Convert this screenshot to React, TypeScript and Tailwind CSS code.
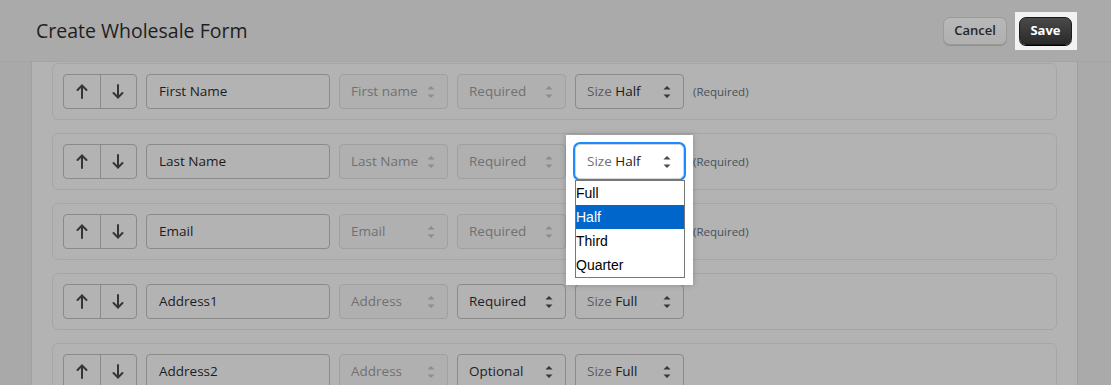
import React from 'react';

type Row = {
  label: string;
  field: string;
  req: string;
  reqEnabled: boolean;
  size: string;
  required: boolean;
  open?: boolean;
  covered?: boolean;
};

const rows: Row[] = [
  { label: 'First Name', field: 'First name', req: 'Required', reqEnabled: false, size: 'Half', required: true },
  { label: 'Last Name', field: 'Last Name', req: 'Required', reqEnabled: false, size: 'Half', required: true, open: true },
  { label: 'Email', field: 'Email', req: 'Required', reqEnabled: false, size: 'Half', required: true, covered: true },
  { label: 'Address1', field: 'Address', req: 'Required', reqEnabled: true, size: 'Full', required: false },
  { label: 'Address2', field: 'Address', req: 'Optional', reqEnabled: true, size: 'Full', required: false },
];

function SelectArrows({ className }: { className?: string }) {
  return (
    <svg viewBox="0 0 20 20" className={className} fill="currentColor">
      <path d="M13 8l-3-3-3 3h6zm-.1 4L10 14.9 7.1 12h5.8z" />
    </svg>
  );
}

function Arrow({ down }: { down?: boolean }) {
  return (
    <svg
      viewBox="0 0 12 15"
      className={down ? 'h-[15px] w-[12px] rotate-180' : 'h-[15px] w-[12px]'}
      fill="none"
      stroke="#353535"
      strokeWidth="2"
      strokeLinecap="round"
      strokeLinejoin="round"
    >
      <path d="M6 1.5V14" />
      <path d="M1.5 6 6 1.5 10.5 6" />
    </svg>
  );
}

function FieldSelect({ text, enabled }: { text: string; enabled: boolean }) {
  return (
    <div
      className={
        enabled
          ? 'flex h-[35px] w-[109px] shrink-0 items-center justify-between rounded-[4px] border border-[#8a8a8a] bg-[#b3b3b3] pl-[11px] pr-[4px] text-[13.5px] whitespace-nowrap text-[#1f1f1f]'
          : 'flex h-[35px] w-[109px] shrink-0 items-center justify-between rounded-[4px] border border-[#a0a0a0] bg-[#b0b0b0] pl-[11px] pr-[4px] text-[13.5px] whitespace-nowrap text-[#707070]'
      }
    >
      <span>{text}</span>
      <SelectArrows className={enabled ? 'h-6 w-6 shrink-0 text-[#363636]' : 'h-6 w-6 shrink-0 text-[#8c8c8c]'} />
    </div>
  );
}

function SizeSelect({ size, open, covered }: { size: string; open?: boolean; covered?: boolean }) {
  if (!open) {
    return (
      <div
        className={
          covered
            ? 'invisible flex h-[35px] w-[109px] shrink-0 items-center justify-between rounded-[4px] border border-[#8a8a8a] pl-[11px] pr-[4px] text-[13.5px]'
            : 'flex h-[35px] w-[109px] shrink-0 items-center justify-between rounded-[4px] border border-[#8a8a8a] bg-[#b3b3b3] pl-[11px] pr-[4px] text-[13.5px] whitespace-nowrap'
        }
      >
        <span>
          <span className="text-[#595c5f]">Size </span>
          <span className="text-[#1a1a1a]">{size}</span>
        </span>
        <SelectArrows className="h-6 w-6 shrink-0 text-[#363636]" />
      </div>
    );
  }
  return (
    <div className="relative h-[35px] w-[109px] shrink-0">
      <div className="absolute -left-[9px] -top-[9px] z-10 h-[150px] w-[127px] bg-white shadow-[0_0_6px_rgba(0,0,0,0.22)]" />
      <div className="relative z-20 flex h-[35px] w-[109px] items-center justify-between whitespace-nowrap rounded-[5px] border border-[#d2d5d8] bg-white pl-[11px] pr-[4px] text-[13.5px] shadow-[0_0_0_2px_#1a8cff]">
        <span>
          <span className="text-[#6d7175]">Size </span>
          <span className="text-[#202223]">{size}</span>
        </span>
        <SelectArrows className="h-6 w-6 shrink-0 text-[#4a4a4a]" />
      </div>
      <ul className="absolute left-0 top-[36px] z-20 w-[110px] border border-[#767676] bg-white font-['Liberation_Sans',Arial,sans-serif] text-[14px] text-black">
        {['Full', 'Half', 'Third', 'Quarter'].map((o) => (
          <li
            key={o}
            className={
              o === size
                ? 'flex h-[24px] items-center bg-[#0066cc] pl-[0px] text-white'
                : 'flex h-[24px] items-center pl-[0px]'
            }
          >
            {o}
          </li>
        ))}
      </ul>
    </div>
  );
}

export default function App() {
  return (
    <div className="h-[385px] w-[1111px] overflow-hidden bg-[#b3b3b3] font-['Open_Sans','Noto_Sans',sans-serif]">
      {/* Header */}
      <header className="flex h-[62px] items-center justify-between border-b border-[#a4a4a4] bg-[#aaaaaa] pl-[36px] pr-[34px]">
        <h1 className="text-[19.5px] text-[#1e1e1e]">Create Wholesale Form</h1>
        <div className="flex items-center gap-[8px]">
          <button className="flex h-[28px] w-[64px] items-center justify-center rounded-[7px] border border-[#9a9a9a] bg-linear-to-b from-[#b8b8b8] to-[#b0b0b0] text-[13px] font-semibold text-[#262626] shadow-[0_1px_0_#8e8e8e]">
            Cancel
          </button>
          <div className="bg-[#f2f2f2] py-[5px] pl-[4px] pr-[5px]">
            <button className="flex h-[28px] w-[53px] items-center justify-center rounded-[7px] border border-[#1a1a1a] bg-linear-to-b from-[#4a4a4a] to-[#2a2a2a] text-[13px] font-bold text-white shadow-[0_1px_0_#000]">
              Save
            </button>
          </div>
        </div>
      </header>

      <div className="flex h-full">
        <aside className="w-[32px] shrink-0 border-r border-[#a0a0a0] bg-[#a9a9a9]" />
        <main className="flex flex-1 flex-col gap-[13px] bg-[#b3b3b3] px-[20px] pt-[1px]">
          {rows.map((r) => (
            <div
              key={r.label}
              className="flex items-center gap-[9px] rounded-[6px] border border-[#a6a6a6] bg-[#b3b3b3] p-[10px]"
            >
              <div className="flex h-[35px] w-[74px] shrink-0 rounded-[4px] border border-[#8a8a8a]">
                <button className="flex flex-1 items-center justify-center">
                  <Arrow />
                </button>
                <button className="flex flex-1 items-center justify-center border-l border-[#8a8a8a]">
                  <Arrow down />
                </button>
              </div>
              <div className="flex h-[35px] w-[184px] shrink-0 items-center rounded-[4px] border border-[#8a8a8a] bg-[#b3b3b3] pl-[12px] text-[13.5px] text-[#1c1c1c]">
                {r.label}
              </div>
              <FieldSelect text={r.field} enabled={false} />
              <FieldSelect text={r.req} enabled={r.reqEnabled} />
              <SizeSelect size={r.size} open={r.open} covered={r.covered} />
              {r.required && <span className="text-[11.5px] text-[#46505a]">(Required)</span>}
            </div>
          ))}
        </main>
        <aside className="w-[34px] shrink-0 border-l border-[#a0a0a0] bg-[#aaaaaa]" />
      </div>
    </div>
  );
}
